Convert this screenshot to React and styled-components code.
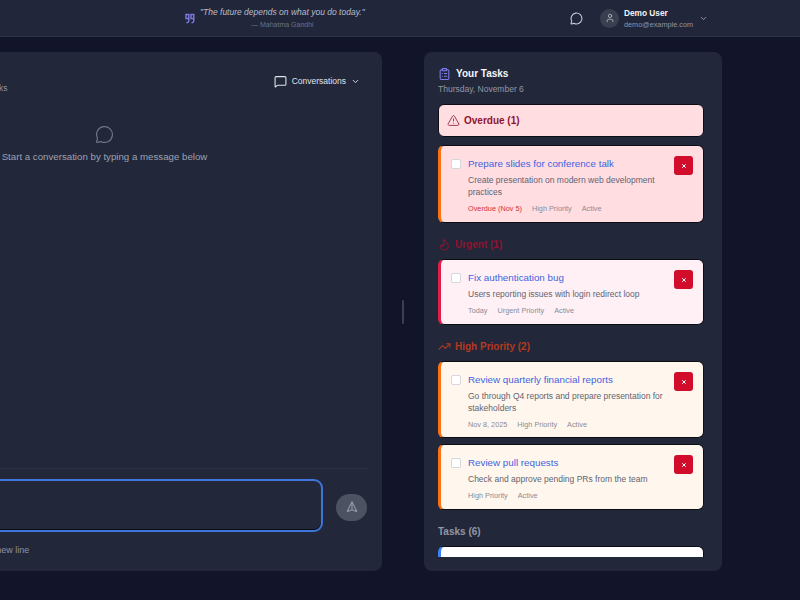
import React from "react";
import styled, { createGlobalStyle } from "styled-components";
import { MessageCircle, User, ChevronDown, MessageSquare, ClipboardList, AlertTriangle, Flame, TrendingUp, Send, X } from "lucide-react";

const Global = createGlobalStyle`
  html, body { margin: 0; padding: 0; height: 100%; overflow: hidden; background: #12152a; }
  body { font-family: "Liberation Sans", Arial, sans-serif; }
  #root { width: 800px; height: 600px; }
`;
const Page = styled.div`
  width: 800px; height: 600px; display: flex; flex-direction: column; overflow: hidden; background: #12152a;
`;
const Header = styled.header`
  height: 36px; flex: none; background: #21263a; border-bottom: 1px solid #2d3245;
  display: flex; align-items: center; box-sizing: content-box; position: relative;
`;
const QuoteBlock = styled.div`
  margin-left: 185px; width: 380px; display: flex; align-items: center; gap: 5px;
`;
const QuoteMark = styled.svg`
  width: 10px; height: 11px; flex: none; color: #7c7ce0; margin-top: 0;
`;
const QuoteText = styled.div`
  display: flex; flex-direction: column; align-items: center; gap: 2px;
`;
const Saying = styled.div`
  font-size: 8.5px; line-height: 11px; font-style: italic; color: #b9bdc9;
`;
const Author = styled.div`
  font-size: 7px; line-height: 9px; color: #6d7284;
`;
const HeaderRight = styled.div`
  display: flex; align-items: center; margin-left: 5px;
`;
const ChatIcon = styled(MessageCircle)`
  width: 13px; height: 13px; color: #c8ccd6; stroke-width: 2; margin-right: 17px;
`;
const Avatar = styled.div`
  width: 19px; height: 19px; border-radius: 50%; background: #3a3f50; color: #b5b9c5;
  display: flex; align-items: center; justify-content: center; margin-right: 5px;
`;
const UserText = styled.div`
  display: flex; flex-direction: column; gap: 2px; width: 75px;
`;
const UserName = styled.div`
  font-size: 8.3px; line-height: 10px; font-weight: 700; color: #f2f3f6;
`;
const UserMail = styled.div`
  font-size: 7.3px; line-height: 9px; color: #8f94a3;
`;
const Main = styled.main`
  flex: 1; min-height: 0; display: flex; padding: 15px 0 29px 0; margin-left: -172px;
`;
const ChatPanel = styled.section`
  width: 554px; flex: none; background: #22273a; border-radius: 8px; box-sizing: border-box;
  display: flex; flex-direction: column; padding: 0 15px 0 24px;
`;
const ChatHead = styled.div`
  height: 59px; flex: none; display: flex; justify-content: space-between; align-items: flex-start; padding-top: 14px; box-sizing: content-box;
`;
const ChatTitles = styled.div`
  display: flex; flex-direction: column; gap: 5px; padding-left: 8px;
`;
const ChatTitle = styled.div`
  font-size: 11px; line-height: 12px; font-weight: 700; color: #fff;
`;
const ChatSub = styled.div`
  font-size: 8.5px; line-height: 10px; color: #8f94a3;
`;
const ConvButton = styled.button`
  display: flex; align-items: center; background: none; border: none; padding: 0; margin: 7px 7px 0 0;
  font: inherit; font-size: 8.5px; color: #e0e3e8; gap: 5px; height: 16px;
`;
const Empty = styled.div`
  height: 0; flex: 1; display: flex; flex-direction: column; align-items: center; gap: 7px; margin-right: 10px;
`;
const EmptyIcon = styled(MessageCircle)`
  width: 19px; height: 19px; color: #6f7485; stroke-width: 1.5;
`;
const EmptyText = styled.div`
  font-size: 9.7px; line-height: 12px; color: #9ea2b1;
`;
const InputArea = styled.div`
  border-top: 1px solid #2d3245; padding-top: 10px; margin-right: -1px;
`;
const InputRow = styled.div`
  display: flex; align-items: center; gap: 13px; padding-right: 1px;
`;
const InputBox = styled.div`
  flex: 1; height: 53px; box-sizing: border-box; border: 2px solid #3f74d8; border-radius: 9px; background: #22273a;
  box-shadow: inset 0 -1px 0 #0a0c14;
`;
const SendButton = styled.div`
  width: 31px; height: 27px; border-radius: 14px; background: #4d5263; color: #9a9eac; flex: none; margin-top: 3px;
  display: flex; align-items: center; justify-content: center;
`;
const SendIcon = styled(Send)`
  width: 12px; height: 12px; transform: rotate(-45deg); margin-top: 3px;
`;
const Hint = styled.div`
  font-size: 9px; line-height: 10px; color: #8f94a3; margin-top: 13px; margin-bottom: 16px;
`;
const Divider = styled.div`
  width: 42px; flex: none; display: flex; align-items: center; justify-content: center;
`;
const Handle = styled.div`
  width: 2px; height: 24px; background: #3a3f52; border-radius: 1px;
`;
const TaskPanel = styled.aside`
  width: 298px; flex: none; background: #22273a; border-radius: 8px; box-sizing: border-box;
  padding: 15px 18px 14px 14px; display: flex; flex-direction: column; overflow: hidden;
`;
const PanelTitle = styled.div`
  display: flex; align-items: center; gap: 5px; font-size: 10px; line-height: 14px; font-weight: 700; color: #f5f6f8;
`;
const PanelIcon = styled(ClipboardList)`
  width: 13px; height: 14px; color: #7f7bee; stroke-width: 2;
`;
const PanelDate = styled.div`
  font-size: 8.5px; line-height: 10px; color: #9297a6; margin-top: 3px; margin-bottom: 10px;
`;
const List = styled.div`
  flex: 1; min-height: 0; overflow: hidden; display: flex; flex-direction: column;
`;
const OverdueBar = styled.div`
  flex: none; height: 33px; box-sizing: border-box; background: #ffdde1; border-radius: 6px;
  border: 1px solid #0b0d16; display: flex; align-items: center; gap: 4px; padding-left: 8px;
  font-size: 10px; font-weight: 700; color: #8f1430; margin-bottom: 8px;
`;
const Section = styled.div`
  flex: none; display: flex; align-items: center; gap: 4px; height: 14px; font-size: 10px; font-weight: 700;
  color: ${p => p.$color}; margin: 14px 0 8px;
`;
const Card = styled.article`
  flex: none; box-sizing: border-box; height: ${p => p.$h}px; background: ${p => p.$bg};
  border-radius: 6px; border: 1px solid #0b0d16; border-left: 3px solid ${p => p.$accent};
  padding: 12px 10px 0 10px; display: flex; gap: 7px; margin-bottom: ${p => p.$gap || 0}px;
  overflow: hidden;
`;
const Check = styled.div`
  width: 8px; height: 8px; flex: none; border-radius: 2px; background: #fff; border: 1px solid #d5d7de; margin-top: 1px;
`;
const CardBody = styled.div`
  flex: 1; min-width: 0;
`;
const CardTitle = styled.div`
  font-size: 9.8px; line-height: 12px; color: #3f62e0;
`;
const CardDesc = styled.div`
  font-size: 8.5px; line-height: 12px; color: #5f6472; margin-top: 4px;
`;
const Meta = styled.div`
  display: flex; gap: 10px; margin-top: 6px; font-size: 7.3px; line-height: 10px; color: #8a8c96;
`;
const MetaDate = styled.span`
  color: ${p => p.$late ? "#d0303f" : "inherit"};
`;
const Delete = styled.div`
  width: 19px; height: 19px; flex: none; border-radius: 3px; background: #d20c2b; color: #fff;
  display: flex; align-items: center; justify-content: center; margin-top: -2px;
`;

const TaskCard = ({ title, desc, date, late, pri, h, bg, accent, gap }) => (
  <Card $h={h} $bg={bg} $accent={accent} $gap={gap}>
    <Check />
    <CardBody>
      <CardTitle>{title}</CardTitle>
      <CardDesc>{desc}</CardDesc>
      <Meta>
        {date && <MetaDate $late={late}>{date}</MetaDate>}
        <span>{pri}</span>
        <span>Active</span>
      </Meta>
    </CardBody>
    <Delete><X size={6} strokeWidth={4} /></Delete>
  </Card>
);

export default function App() {
  return (
    <Page>
      <Global />
      <Header>
        <QuoteBlock>
          <QuoteMark viewBox="0 0 10 11" fill="none" stroke="currentColor" strokeWidth="1.4">
            <path d="M1 1.5h2.8v4H1zM3.8 5.5v2.2c0 1-.6 1.8-2.3 2M6 1.5h2.8v4H6zM8.8 5.5v2.2c0 1-.6 1.8-2.3 2" />
          </QuoteMark>
          <QuoteText>
            <Saying>"The future depends on what you do today."</Saying>
            <Author>— Mahatma Gandhi</Author>
          </QuoteText>
        </QuoteBlock>
        <HeaderRight>
          <ChatIcon />
          <Avatar><User size={10} /></Avatar>
          <UserText>
            <UserName>Demo User</UserName>
            <UserMail>demo@example.com</UserMail>
          </UserText>
          <ChevronDown size={9} color="#9a9eac" strokeWidth={2.5} />
        </HeaderRight>
      </Header>
      <Main>
        <ChatPanel>
          <ChatHead>
            <ChatTitles>
              <ChatTitle>AI Assistant</ChatTitle>
              <ChatSub>Ask me anything about your daily tasks</ChatSub>
            </ChatTitles>
            <ConvButton><MessageSquare size={13} /> Conversations <ChevronDown size={9} strokeWidth={2.5} /></ConvButton>
          </ChatHead>
          <Empty>
            <EmptyIcon />
            <EmptyText>Start a conversation by typing a message below</EmptyText>
          </Empty>
          <InputArea>
            <InputRow>
              <InputBox />
              <SendButton><SendIcon /></SendButton>
            </InputRow>
            <Hint>Press Enter to send, Shift+Enter for new line</Hint>
          </InputArea>
        </ChatPanel>
        <Divider><Handle /></Divider>
        <TaskPanel>
          <PanelTitle><PanelIcon /> Your Tasks</PanelTitle>
          <PanelDate>Thursday, November 6</PanelDate>
          <List>
            <OverdueBar><AlertTriangle size={13} strokeWidth={1.5} /> Overdue (1)</OverdueBar>
            <TaskCard h={78} bg="#ffdde1" accent="#f97316" title="Prepare slides for conference talk" desc="Create presentation on modern web development practices" date="Overdue (Nov 5)" late pri="High Priority" />
            <Section $color="#8f1430"><Flame size={13} strokeWidth={2} /> Urgent (1)</Section>
            <TaskCard h={66} bg="#fff0f5" accent="#e11d48" title="Fix authentication bug" desc="Users reporting issues with login redirect loop" date="Today" pri="Urgent Priority" />
            <Section $color="#b23a20"><TrendingUp size={13} strokeWidth={2} /> High Priority (2)</Section>
            <TaskCard h={77} gap={6} bg="#fff7ed" accent="#f97316" title="Review quarterly financial reports" desc="Go through Q4 reports and prepare presentation for stakeholders" date="Nov 8, 2025" pri="High Priority" />
            <TaskCard h={66} bg="#fff7ed" accent="#f97316" title="Review pull requests" desc="Check and approve pending PRs from the team" pri="High Priority" />
            <Section $color="#9297a6">Tasks (6)</Section>
            <TaskCard h={60} bg="#ffffff" accent="#3b82f6" title="" desc="" pri="" />
          </List>
        </TaskPanel>
      </Main>
    </Page>
  );
}
